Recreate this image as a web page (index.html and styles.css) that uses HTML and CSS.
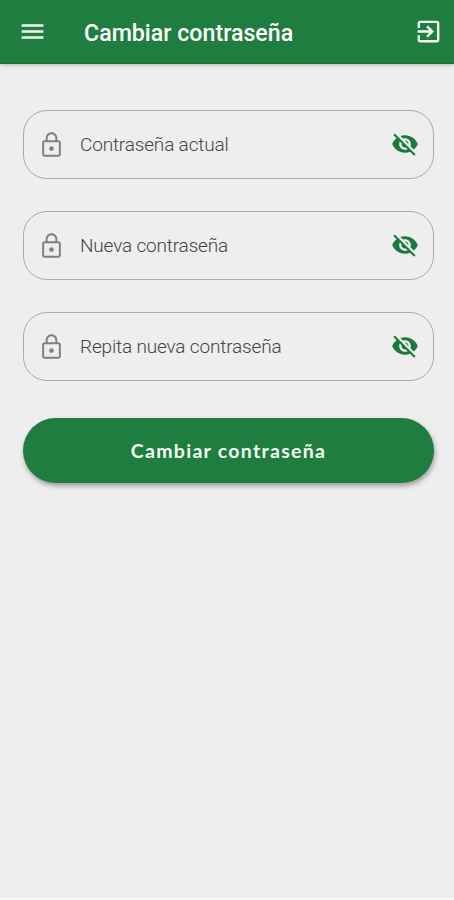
FILE: index.html
```html
<!DOCTYPE html>
<html lang="es">
<head>
<meta charset="utf-8">
<title>Cambiar contraseña</title>
<link rel="stylesheet" href="styles.css">
</head>
<body>
<svg class="defs" aria-hidden="true">
  <symbol id="lock" viewBox="0 0 24 24"><path d="M12 17c1.1 0 2-.9 2-2s-.9-2-2-2-2 .9-2 2 .9 2 2 2zm6-9h-1V6c0-2.760-2.240-5-5-5S7 3.240 7 6v2H6c-1.100 0-2 .9-2 2v10c0 1.100.9 2 2 2h12c1.100 0 2-.9 2-2V10c0-1.100-.9-2-2-2zM8.700 6c0-1.820 1.480-3.300 3.300-3.300s3.300 1.480 3.300 3.300v2H8.700V6zM18.300 20.300H5.700V9.700h12.600v10.600z"/></symbol>
  <symbol id="eye-off" viewBox="0 0 24 24"><path d="M12 7c2.760 0 5 2.240 5 5 0 .65-.13 1.260-.36 1.830l2.920 2.920c1.510-1.260 2.700-2.890 3.430-4.750-1.730-4.390-6-7.500-11-7.500-1.400 0-2.740.25-3.980.7l2.160 2.160C10.740 7.130 11.350 7 12 7zM2 4.270l2.280 2.280.46.46C3.080 8.300 1.780 10.020 1 12c1.730 4.390 6 7.500 11 7.500 1.550 0 3.030-.3 4.380-.84l.42.42L19.730 22 21 20.730 3.270 3 2 4.270zM7.530 9.800l1.550 1.550c-.05.21-.08.43-.08.65 0 1.660 1.340 3 3 3 .22 0 .44-.03.65-.08l1.550 1.550c-.67.33-1.410.53-2.200.53-2.760 0-5-2.240-5-5 0-.79.2-1.530.53-2.200zm4.310-.78l3.150 3.150.02-.16c0-1.660-1.340-3-3-3l-.17.01z"/></symbol>
</svg>
<header class="bar">
  <svg class="icon" viewBox="0 0 24 24"><path d="M3 18h18v-2H3v2zm0-5h18v-2H3v2zm0-7v2h18V6H3z"/></svg>
  <h1 class="title">Cambiar contraseña</h1>
  <svg class="icon" viewBox="0 0 24 24"><path d="M10.090 15.590L11.500 17l5-5-5-5-1.410 1.410L12.670 11H3v2h9.670l-2.580 2.590zM19 3H5c-1.110 0-2 .9-2 2v4h2V5h14v14H5v-4H3v4c0 1.100.89 2 2 2h14c1.100 0 2-.9 2-2V5c0-1.100-.9-2-2-2z"/></svg>
</header>
<main class="form">
  <div class="field"><svg class="lock"><use href="#lock"/></svg><span class="label">Contraseña actual</span><svg class="eye"><use href="#eye-off"/></svg></div>
  <div class="field"><svg class="lock"><use href="#lock"/></svg><span class="label">Nueva contraseña</span><svg class="eye"><use href="#eye-off"/></svg></div>
  <div class="field"><svg class="lock"><use href="#lock"/></svg><span class="label">Repita nueva contraseña</span><svg class="eye"><use href="#eye-off"/></svg></div>
  <button class="submit">Cambiar contraseña</button>
</main>
</body>
</html>
```
FILE: styles.css
```css
* { box-sizing: border-box; }
body {
  margin: 0;
  height: 900px;
  display: flex;
  flex-direction: column;
  overflow: hidden;
  background: #eee;
  border-bottom: 2px solid #f8f8f8;
  font-family: Roboto, sans-serif;
}
.defs { display: none; }
.bar {
  height: 64px;
  flex: none;
  display: flex;
  align-items: center;
  padding: 0 11px 1px 18px;
  background: #1f7e3f;
  color: #fff;
  border-bottom: 1px solid #14713c;
  box-shadow: 0 1px 4px rgba(0, 0, 0, .25);
}
.icon { width: 29px; height: 29px; fill: #f4fff4; }
.title {
  flex: 1;
  margin: 3px 0 0 37px;
  font-size: 23.2px;
  font-weight: 500;
  line-height: 30px;
  white-space: nowrap;
}
.form {
  display: flex;
  flex-direction: column;
  gap: 32px;
  padding: 46px 20px 0 23px;
}
.field {
  height: 69px;
  display: flex;
  align-items: center;
  padding: 0 14px 0 13px;
  border: 1px solid #aaa;
  border-radius: 24px;
}
.lock { width: 29px; height: 28px; fill: #808080; }
.label {
  flex: 1;
  margin-left: 14px;
  font-size: 19px;
  font-weight: 300;
  line-height: 24px;
  letter-spacing: -.17px;
  color: #444;
}
.eye { width: 28px; height: 28px; margin-bottom: 1px; fill: #1a7a3b; }
.submit {
  height: 65px;
  margin-top: 5px;
  border: 0;
  border-radius: 33px;
  background: #1f7e3f;
  color: #f4fff4;
  font: 700 19.5px/24px Lato, sans-serif;
  letter-spacing: 1.3px;
  box-shadow: 1px 3px 5px rgba(0, 0, 0, .35);
}
```
